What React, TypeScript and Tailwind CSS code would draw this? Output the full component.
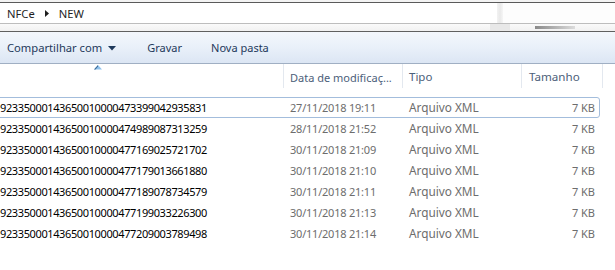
import React from "react";

const rows = [
  ["92335000143650010000473399042935831", "27/11/2018 19:11"],
  ["92335000143650010000474989087313259", "28/11/2018 21:52"],
  ["92335000143650010000477169025721702", "30/11/2018 21:09"],
  ["92335000143650010000477179013661880", "30/11/2018 21:10"],
  ["92335000143650010000477189078734579", "30/11/2018 21:11"],
  ["92335000143650010000477199033226300", "30/11/2018 21:13"],
  ["92335000143650010000477209003789498", "30/11/2018 21:14"],
];

export default function App() {
  return (
    <div
      className="w-[615px] h-[270px] overflow-hidden bg-white text-[10.5px] leading-none"
      style={{ fontFamily: '"Noto Sans", "Open Sans", sans-serif' }}
    >
      {/* address bar */}
      <div className="h-[2px] bg-[#f3f3f3]" />
      <div className="h-[1px] bg-[#5a5a5a]" />
      <div className="h-[20px] flex bg-white">
        <div className="flex items-center pl-[7px] pt-[1px] text-[#1e1e1e] w-[497px] text-[11.2px]">
          <span>NFCe</span>
          <svg width="5" height="7" viewBox="0 0 5 7" className="ml-[10px] mr-[9px]">
            <path d="M0 0 L4 3.5 L0 7 Z" fill="#1e1e1e" />
          </svg>
          <span>NEW</span>
        </div>
        <div className="w-[6px] bg-gradient-to-r from-[#f2f2f2] via-[#e9e9e9] to-[#f6f6f6]" />
        <div className="flex-1 bg-[#fdfdfd]" />
      </div>
      <div className="h-[1px] bg-[#bdbdbd]" />
      <div className="h-[7px] bg-gradient-to-b from-[#fafafa] to-[#f1f1f1] flex">
        <div className="w-[490px]" />
        <div className="w-[20px] bg-[#e8e8e8]" />
        <div className="w-[25px]" />
        <div className="w-[40px] bg-gradient-to-r from-[#8a8a8a] to-[#dcdcdc] mt-[2px] h-[3px]" />
      </div>
      <div className="h-[1px] bg-[#606060]" />

      {/* command bar */}
      <div className="h-[31px] bg-gradient-to-b from-[#f3f7fc] via-[#e9f0f9] to-[#dce6f4] flex items-center text-[#1e395b] pl-[7px]">
        <span className="text-[11.2px]">Compartilhar com</span>
        <svg width="8" height="5" viewBox="0 0 8 5" className="ml-[6px] mt-[1px]">
          <path d="M0 0 L8 0 L4 4.5 Z" fill="#1e395b" />
        </svg>
        <span className="ml-[31px] text-[11px]">Gravar</span>
        <span className="ml-[29px] text-[11px]">Nova pasta</span>
      </div>
      <div className="h-[1px] bg-[#a0afc3]" />

      {/* column header */}
      <div className="relative h-[24px] flex text-[#4c607a] text-[11px]">
        <svg width="8" height="5" viewBox="0 0 8 5" className="absolute left-[94px] top-[1px]">
          <path d="M0 4.5 L4 0 L8 4.5 Z" fill="#8fc1ec" />
          <path d="M0 4.5 L4 0 L4 1.5 L1.5 4.5 Z" fill="#3d6b97" />
        </svg>
        <div className="w-[284px] border-r border-[#e3e8ef]" />
        <div className="w-[119px] border-r border-[#e3e8ef] flex items-center pl-[6px] pt-[2px]">
          Data de modificaç...
        </div>
        <div className="w-[119px] border-r border-[#e3e8ef] flex items-center pl-[6px] pt-[2px] text-[11.5px]">
          Tipo
        </div>
        <div className="w-[81px] border-r border-[#e3e8ef] flex items-center pl-[7px] pt-[2px] text-[11.6px]">
          Tamanho
        </div>
      </div>

      {/* rows */}
      <div className="mt-[9px] flex flex-col">
        {rows.map(([name, date], i) => (
          <div
            key={i}
            className={
              "h-[21px] w-[603px] -ml-[3px] flex items-center rounded-[3px] border " +
              (i === 0 ? "border-[#a3bddc]" : "border-transparent")
            }
          >
            <div className="w-[286px] pl-[2px] text-[#000000] text-[11px] tracking-[-0.38px] whitespace-nowrap">
              {name}
            </div>
            <div className="w-[119px] pl-[6px] text-[#6d6d6d] text-[11px] tracking-[-0.22px] whitespace-nowrap">
              {date}
            </div>
            <div className="w-[119px] pl-[6px] text-[#6d6d6d] text-[11.8px] whitespace-nowrap">Arquivo XML</div>
            <div className="w-[73px] text-right text-[#6d6d6d] text-[11px] whitespace-nowrap">7 KB</div>
          </div>
        ))}
      </div>
    </div>
  );
}
